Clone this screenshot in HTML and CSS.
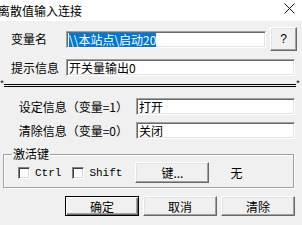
FILE: index.html
```html
<!DOCTYPE html>
<html>
<head>
<meta charset="utf-8">
<link rel="stylesheet" href="styles.css">
</head>
<body>
<div class="window">
  <div class="titlebar">
    <span class="title-text">离散值输入连接</span>
    <svg class="close" width="11" height="11" viewBox="0 0 11 11"><path d="M0.5 0.5 L10.5 10.5 M10.5 0.5 L0.5 10.5" stroke="#111" stroke-width="1" fill="none"/></svg>
  </div>
  <div class="content">
    <div class="row row1">
      <span class="label">变量名</span>
      <div class="field f1"><span class="sel">\\本站点\启动20</span></div>
      <div class="btn qbtn">?</div>
    </div>
    <div class="row row2">
      <span class="label">提示信息</span>
      <div class="field f2">开关量输出0</div>
    </div>
    <div class="sep">
      <span class="star">*</span>
      <span class="dline"></span>
      <span class="star">*</span>
    </div>
    <div class="row row3">
      <span class="label rlabel">设定信息（变量=1）</span>
      <div class="field f3">打开</div>
    </div>
    <div class="row row4">
      <span class="label rlabel">清除信息（变量=0）</span>
      <div class="field f3">关闭</div>
    </div>
    <fieldset class="group">
      <legend class="legend">激活键</legend>
      <div class="group-row">
        <span class="check"></span>
        <span class="mono ctrl">Ctrl</span>
        <span class="check"></span>
        <span class="mono shift">Shift</span>
        <div class="btn keybtn">键...</div>
        <span class="none">无</span>
      </div>
    </fieldset>
    <div class="buttons">
      <div class="btn bbtn default">确定</div>
      <div class="btn bbtn">取消</div>
      <div class="btn bbtn">清除</div>
    </div>
  </div>
</div>
</body>
</html>
```
FILE: styles.css
```css
* { box-sizing: border-box; }
html, body { margin: 0; padding: 0; }
body {
  width: 302px;
  height: 225px;
  overflow: hidden;
  background: #f0f0f0;
  font-family: "Noto Sans CJK SC", "Liberation Sans", sans-serif;
  font-size: 12px;
  color: #000;
}
.window { width: 302px; height: 225px; background: #f0f0f0; }
.titlebar {
  height: 21px;
  background: #fff;
  display: flex;
  align-items: center;
  justify-content: space-between;
}
.title-text { margin-left: -2px; line-height: 21px; font-size: 12px; }
.close { margin-right: 7px; margin-top: -5px; }
.row { display: flex; align-items: center; }
.row1 { margin-top: 6px; height: 24px; padding-left: 11px; }
.row2 { margin-top: 8px; height: 17px; padding-left: 11px; }
.label { width: 55px; line-height: 14px; white-space: nowrap; }
.rlabel { width: 128px; text-align: right; margin-right: 8px; }
.row3 { margin-top: 10px; height: 17px; }
.row4 { margin-top: 7px; height: 17px; }
.field {
  height: 17px;
  background: #fff;
  border: 1px solid;
  border-color: #a0a0a0 #fff #fff #a0a0a0;
  box-shadow: inset 1px 1px 0 #696969, inset -1px -1px 0 #e3e3e3;
  padding: 1px 0 0 2px;
  line-height: 14px;
  white-space: nowrap;
  overflow: hidden;
}
.f1 { width: 200px; }
.f2 { width: 229px; }
.f3 { width: 159px; }
.sel { background: #0078d7; color: #fff; display: inline-block; height: 14px; line-height: 14px; }
.btn {
  background: #f0f0f0;
  border: 1px solid;
  border-color: #fff #696969 #696969 #fff;
  box-shadow: inset -1px -1px 0 #a0a0a0, inset 1px 1px 0 #e3e3e3;
  display: flex;
  align-items: center;
  justify-content: center;
  white-space: nowrap;
}
.qbtn { width: 27px; height: 24px; margin-left: 4px; font-family: "Liberation Sans", sans-serif; }
.sep {
  margin-top: 7px;
  height: 5px;
  display: flex;
  align-items: center;
}
.star {
  width: 4px;
  font-family: "Liberation Mono", monospace;
  font-size: 9px;
  line-height: 5px;
  height: 5px;
  overflow: visible;
  display: flex;
  justify-content: center;
}
.dline {
  flex: 1;
  height: 3px;
  border-top: 1px solid #000;
  border-bottom: 1px solid #000;
}
.sep .star:last-child { margin-right: 2px; }
.group {
  margin: 8px 8px 0 3px;
  padding: 0;
  width: 291px;
  border: 1px solid #a0a0a0;
  box-shadow: 1px 1px 0 #fff, inset 1px 1px 0 #fff;
  min-width: 0;
}
.legend {
  margin-left: 8px;
  padding: 0 1px;
  line-height: 14px;
  height: 14px;
}
.group-row {
  display: flex;
  align-items: center;
  margin-top: 1px;
  height: 21px;
  padding-left: 14px;
  margin-bottom: 4px;
}
.check {
  width: 12px;
  height: 12px;
  background: #fff;
  border: 1px solid;
  border-color: #808080 #fff #fff #808080;
  box-shadow: inset 1px 1px 0 #404040, inset -1px -1px 0 #dcdcdc;
}
.mono { font-family: "Liberation Mono", monospace; font-size: 11px; line-height: 12px; }
.ctrl { margin-left: 5px; margin-right: 11px; }
.shift { margin-left: 5px; margin-right: 13px; }
.keybtn { width: 74px; height: 21px; }
.none { margin-left: 21px; }
.buttons {
  display: flex;
  gap: 4px;
  margin-top: 8px;
  padding-left: 65px;
}
.bbtn { width: 74px; height: 20px; }
.default {
  border: 1px solid #000;
  box-shadow: inset 1px 1px 0 #fff, inset -1px -1px 0 #696969, inset -2px -2px 0 #a0a0a0;
}
```
